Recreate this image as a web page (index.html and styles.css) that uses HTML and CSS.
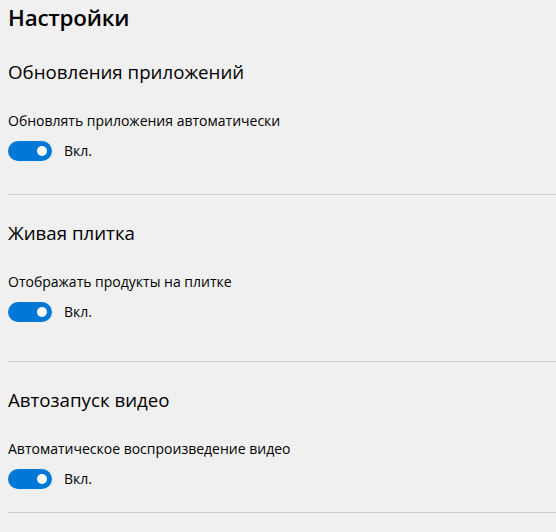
FILE: index.html
```html
<!DOCTYPE html>
<html lang="ru">
<head>
<meta charset="utf-8">
<title>Настройки</title>
<link rel="stylesheet" href="styles.css">
</head>
<body>
<main class="page">
  <h1 class="title">Настройки</h1>

  <section class="group group--first">
    <h2 class="group-title">Обновления приложений</h2>
    <p class="label">Обновлять приложения автоматически</p>
    <div class="toggle-row">
      <span class="toggle" role="switch" aria-checked="true"><span class="knob"></span></span>
      <span class="state">Вкл.</span>
    </div>
  </section>

  <section class="group group--second">
    <h2 class="group-title">Живая плитка</h2>
    <p class="label">Отображать продукты на плитке</p>
    <div class="toggle-row">
      <span class="toggle" role="switch" aria-checked="true"><span class="knob"></span></span>
      <span class="state">Вкл.</span>
    </div>
  </section>

  <section class="group group--third">
    <h2 class="group-title">Автозапуск видео</h2>
    <p class="label">Автоматическое воспроизведение видео</p>
    <div class="toggle-row">
      <span class="toggle" role="switch" aria-checked="true"><span class="knob"></span></span>
      <span class="state">Вкл.</span>
    </div>
  </section>
</main>
</body>
</html>
```

FILE: styles.css
```css
html, body {
  margin: 0;
  padding: 0;
  background: #f0f0f0;
}

body {
  font-family: "Open Sans", "Noto Sans", sans-serif;
  color: #000;
}

.page {
  padding: 2px 0 0 8px;
}

.title {
  margin: 0;
  font-size: 22.4px;
  font-weight: 600;
  line-height: 31px;
  letter-spacing: -0.2px;
}

.group {
  border-bottom: 1px solid #cccccc;
  padding-top: 24px;
}

.group--first {
  padding-top: 25px;
  padding-bottom: 33px;
}

.group--second {
  padding-bottom: 39px;
}

.group--third {
  padding-bottom: 23px;
}

.group-title {
  margin: 0;
  font-size: 18.7px;
  font-weight: 400;
  line-height: 28px;
}

.label {
  margin: 25px 0 0;
  font-size: 14px;
  line-height: 20px;
}

.toggle-row {
  margin-top: 10px;
  display: flex;
  align-items: center;
  gap: 12px;
  height: 20px;
}

.toggle {
  width: 44px;
  height: 20px;
  border-radius: 10px;
  background: #0078d7;
  display: flex;
  align-items: center;
  justify-content: flex-end;
  padding-right: 5px;
  box-sizing: border-box;
}

.knob {
  width: 10px;
  height: 10px;
  border-radius: 50%;
  background: #ffffff;
}

.state {
  font-size: 14px;
  line-height: 20px;
}
```
